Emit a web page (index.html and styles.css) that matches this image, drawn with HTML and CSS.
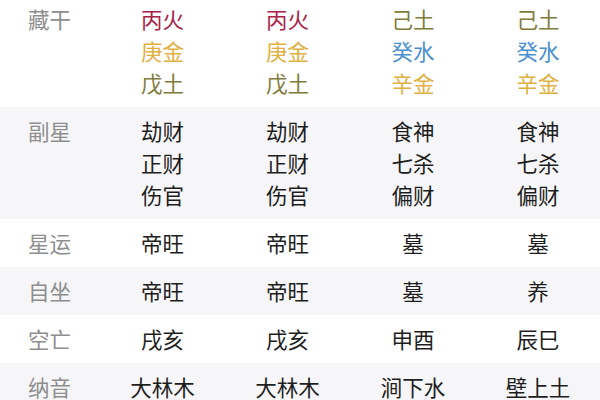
FILE: index.html
```html
<!DOCTYPE html>
<html lang="zh">
<head>
<meta charset="utf-8">
<link rel="stylesheet" href="styles.css">
</head>
<body>
<div class="chart">
  <div class="row">
    <div class="label">藏干</div>
    <div class="cell"><span class="fire">丙火</span><span class="metal">庚金</span><span class="earth">戊土</span></div>
    <div class="cell"><span class="fire">丙火</span><span class="metal">庚金</span><span class="earth">戊土</span></div>
    <div class="cell"><span class="earth">己土</span><span class="water">癸水</span><span class="metal">辛金</span></div>
    <div class="cell"><span class="earth">己土</span><span class="water">癸水</span><span class="metal">辛金</span></div>
  </div>
  <div class="row alt">
    <div class="label">副星</div>
    <div class="cell"><span>劫财</span><span>正财</span><span>伤官</span></div>
    <div class="cell"><span>劫财</span><span>正财</span><span>伤官</span></div>
    <div class="cell"><span>食神</span><span>七杀</span><span>偏财</span></div>
    <div class="cell"><span>食神</span><span>七杀</span><span>偏财</span></div>
  </div>
  <div class="row">
    <div class="label">星运</div>
    <div class="cell"><span>帝旺</span></div>
    <div class="cell"><span>帝旺</span></div>
    <div class="cell"><span>墓</span></div>
    <div class="cell"><span>墓</span></div>
  </div>
  <div class="row alt">
    <div class="label">自坐</div>
    <div class="cell"><span>帝旺</span></div>
    <div class="cell"><span>帝旺</span></div>
    <div class="cell"><span>墓</span></div>
    <div class="cell"><span>养</span></div>
  </div>
  <div class="row">
    <div class="label">空亡</div>
    <div class="cell"><span>戌亥</span></div>
    <div class="cell"><span>戌亥</span></div>
    <div class="cell"><span>申酉</span></div>
    <div class="cell"><span>辰巳</span></div>
  </div>
  <div class="row alt">
    <div class="label">纳音</div>
    <div class="cell"><span>大林木</span></div>
    <div class="cell"><span>大林木</span></div>
    <div class="cell"><span>涧下水</span></div>
    <div class="cell"><span>壁上土</span></div>
  </div>
</div>
</body>
</html>
```
FILE: styles.css
```css
html, body {
  margin: 0;
  padding: 0;
  background: #ffffff;
  overflow: hidden;
}
body {
  font-family: "Noto Sans CJK SC", "Noto Sans", sans-serif;
  font-size: 21.5px;
  color: #1e1e1e;
}
.chart {
  margin-top: -5px;
  display: flex;
  flex-direction: column;
}
.row {
  display: grid;
  grid-template-columns: 100px 125px 125px 126px 124px;
  padding: 8px 0;
  line-height: 32px;
  background: #ffffff;
}
.row.alt {
  background: #f6f6f8;
}
.label {
  padding-left: 28px;
  color: #8e8e8e;
}
.cell {
  display: flex;
  flex-direction: column;
  align-items: center;
}
.fire { color: #a8224a; }
.metal { color: #dfb042; }
.earth { color: #7f7c3c; }
.water { color: #4a8fcf; }
```
